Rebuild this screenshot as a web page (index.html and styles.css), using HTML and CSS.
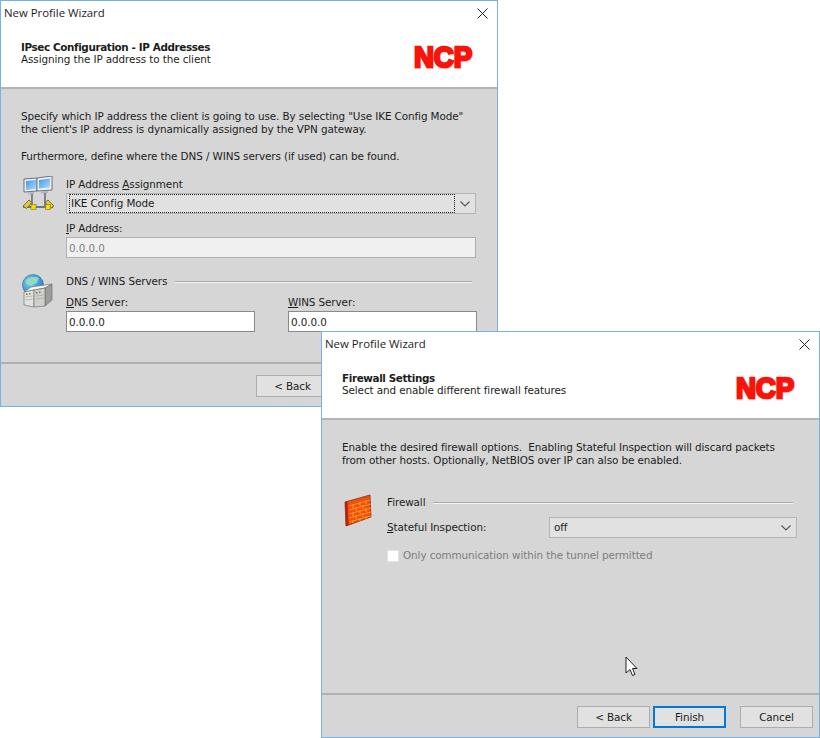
FILE: index.html
```html
<!DOCTYPE html>
<html lang="en">
<head>
<meta charset="utf-8">
<title>New Profile Wizard</title>
<link rel="stylesheet" href="styles.css">
</head>
<body>
<section class="window window-back">
  <div class="titlebar"><span>New Profile Wizard</span><svg class="close" viewBox="0 0 11 11"><path d="M.5.5l10 10M10.5.5l-10 10"/></svg></div>
  <header class="head">
    <div class="head-text"><h1>IPsec Configuration - IP Addresses</h1><p>Assigning the IP address to the client</p></div>
    <svg class="logo" viewBox="0 0 60 26"><text class="logo-shadow" x="1.500" y="24.500" textLength="58" lengthAdjust="spacingAndGlyphs">NCP</text><text class="logo-text" x="1" y="23.500" textLength="58" lengthAdjust="spacingAndGlyphs">NCP</text></svg>
  </header>
  <main class="content">
    <p class="intro">Specify which IP address the client is going to use. By selecting "Use IKE Config Mode"<br>the client's IP address is dynamically assigned by the VPN gateway.</p>
    <p class="intro intro-next">Furthermore, define where the DNS / WINS servers (if used) can be found.</p>
    <div class="group group-assign">
      <svg class="icon" viewBox="0 0 34 36">
        <defs><linearGradient id="scr" x1="0" y1="0" x2="1" y2="1"><stop offset="0" stop-color="#3f96ea"/><stop offset="1" stop-color="#b5dcf8"/></linearGradient></defs>
        <path d="M3 3l13-1v13l-13 1z" fill="#eef2f6" stroke="#5c6470" stroke-width=".9"/><path d="M5 5l10-1v9l-10 1z" fill="url(#scr)"/>
        <path d="M16 2l15-2v14l-15 1z" fill="#eef2f6" stroke="#5c6470" stroke-width=".9"/><path d="M18 4l11-1.500v9l-11 1z" fill="url(#scr)"/>
        <path d="M7 16.500l6-.5v2l-6 .5zM20 15.500l7-.5v2l-7 .5z" fill="#aeb6be"/>
        <path d="M11 18v12M24 17v13M2 31h30" stroke="#4e5862" stroke-width="1.300" fill="none"/>
        <path d="M2 30l6-6 3 2.500-5.500 6z" fill="#e8c63a" stroke="#4f4a20" stroke-width=".7"/><path d="M33 30l-6-6-3 2.500 5.500 6z" fill="#e8c63a" stroke="#4f4a20" stroke-width=".7"/>
        <rect x="10" y="28.500" width="5" height="5" fill="#f8dc00" stroke="#6a6420" stroke-width=".5"/><rect x="24.500" y="28.500" width="5" height="5" fill="#f8dc00" stroke="#6a6420" stroke-width=".5"/>
      </svg>
      <div class="fields fields-narrow">
        <label class="field-label label-first">IP Address <u>A</u>ssignment</label>
        <div class="combo combo-focus"><span class="combo-value">IKE Config Mode</span><svg class="chev" viewBox="0 0 10 6"><path d="M.5.5L5 5 9.500.5"/></svg></div>
        <label class="field-label label-gap"><u>I</u>P Address:</label>
        <div class="input input-off">0.0.0.0</div>
      </div>
    </div>
    <div class="group group-dns">
      <svg class="icon icon-dns" viewBox="0 0 34 36">
        <defs><radialGradient id="globe" cx=".35" cy=".35" r=".8"><stop offset="0" stop-color="#7ed0f0"/><stop offset="1" stop-color="#1c74b8"/></radialGradient></defs>
        <circle cx="12" cy="11" r="10.500" fill="url(#globe)" stroke="#1d6fa8" stroke-width=".6"/><path d="M5 6c4-3 9-4 13-2-2 3-1 5-5 6-2 3-6 2-8-1z" fill="#8fdcc4"/>
        <path d="M3 18l7-5 21-3-7 4z" fill="#f6f6f4" stroke="#666" stroke-width=".6"/>
        <path d="M24 14l7-4v16l-7 6z" fill="#9d9d9a" stroke="#666" stroke-width=".6"/>
        <path d="M3 18l10-2v17l-10-2z" fill="#e2e2df" stroke="#666" stroke-width=".6"/>
        <path d="M13 16l11-2v18l-11 1z" fill="#d0d0cd" stroke="#666" stroke-width=".6"/>
        <path d="M4.500 23l7-1M4.500 26l7-1M15 22l8-1M15 25l8-1" stroke="#9a9a98" stroke-width=".6"/>
        <rect x="5" y="19.500" width="1.500" height="1.500" fill="#d83a2a"/><rect x="8" y="19" width="1.500" height="1.500" fill="#3aa83a"/><rect x="15" y="18" width="1.500" height="1.500" fill="#d83a2a"/><rect x="18" y="17.500" width="1.500" height="1.500" fill="#3aa83a"/>
      </svg>
      <div class="fields">
        <div class="legend legend-back"><span>DNS / WINS Servers</span><span class="rule"></span></div>
        <div class="pair">
          <div class="pair-col"><label class="field-label"><u>D</u>NS Server:</label><div class="input">0.0.0.0</div></div>
          <div class="pair-col"><label class="field-label"><u>W</u>INS Server:</label><div class="input">0.0.0.0</div></div>
        </div>
      </div>
    </div>
  </main>
  <footer class="foot foot-covered">
    <button class="btn" type="button">&lt; Back</button>
  </footer>
</section>

<section class="window window-front">
  <div class="titlebar"><span>New Profile Wizard</span><svg class="close" viewBox="0 0 11 11"><path d="M.5.5l10 10M10.5.5l-10 10"/></svg></div>
  <header class="head">
    <div class="head-text"><h1>Firewall Settings</h1><p>Select and enable different firewall features</p></div>
    <svg class="logo" viewBox="0 0 60 26"><text class="logo-shadow" x="1.500" y="24.500" textLength="58" lengthAdjust="spacingAndGlyphs">NCP</text><text class="logo-text" x="1" y="23.500" textLength="58" lengthAdjust="spacingAndGlyphs">NCP</text></svg>
  </header>
  <main class="content">
    <p class="intro">Enable the desired firewall options.&nbsp; Enabling Stateful Inspection will discard packets<br>from other hosts. Optionally, NetBIOS over IP can also be enabled.</p>
    <div class="group group-fw">
      <svg class="icon icon-fw" viewBox="0 0 28 33">
        <path d="M1 8L26 1l1 22L2 32z" fill="#f2500e" stroke="#6e2a08" stroke-width=".7"/>
        <path d="M1 8l2.500-.7 1 24L2 32z" fill="#b8240a"/>
        <path d="M5 12L26 6M5 16l22-6M5 20l22-6M5 24l22-6M5 28l22-6" stroke="#fb9a24" stroke-width=".9" fill="none"/>
        <path d="M9 10v4M16 8v4M22 6v4M12 13v4M19 11v4M9 18v4M16 16v4M22 14v4M12 21v4M19 19v4M9 26v3M16 24v4M22 22v4" stroke="#fdae30" stroke-width=".8" fill="none"/>
      </svg>
      <div class="fields fields-front">
        <div class="legend legend-front"><span>Firewall</span><span class="rule"></span></div>
        <div class="inline-field">
          <label class="field-label inline-label"><u>S</u>tateful Inspection:</label>
          <div class="combo combo-fill"><span class="combo-value">off</span><svg class="chev" viewBox="0 0 10 6"><path d="M.5.5L5 5 9.500.5"/></svg></div>
        </div>
        <div class="check"><span class="box"></span><span>Only communication within the tunnel permitted</span></div>
      </div>
    </div>
  </main>
  <footer class="foot">
    <button class="btn" type="button">&lt; Back</button>
    <button class="btn btn-default" type="button">Finish</button>
    <button class="btn btn-last" type="button">Cancel</button>
  </footer>
  <svg class="cursor" viewBox="0 0 13 21"><path d="M1 1v16l4-3.500 2.500 6 2.500-1-2.500-6H12z" fill="#fff" stroke="#222" stroke-width="1" stroke-linejoin="round"/></svg>
</section>
</body>
</html>
```
FILE: styles.css
```css
* { box-sizing: border-box; }
html, body { margin: 0; height: 738px; overflow: hidden; background: #fff; }
body {
  position: relative;
  font-family: "DejaVu Sans", sans-serif;
  font-size: 10.4px;
  letter-spacing: -0.09px;
  line-height: 13px;
  color: #1c1c1c;
}
.window {
  position: absolute;
  height: 407px;
  display: flex;
  flex-direction: column;
  border: 1px solid #74b2ec;
  background: #d6d6d6;
}
.window-back { left: 0; top: 0; width: 498px; }
.window-front { left: 321px; top: 331px; width: 499px; }
.titlebar {
  height: 25px;
  flex: none;
  display: flex;
  align-items: center;
  justify-content: space-between;
  padding: 0 9px 0 3px;
  background: #fff;
  font-family: "Open Sans", sans-serif;
  font-size: 11.4px;
  letter-spacing: 0;
}
.titlebar span { padding-bottom: 2px; }
.close { width: 11px; height: 11px; }
.close path { stroke: #222; stroke-width: 1; fill: none; }
.head {
  height: 63px;
  flex: none;
  display: flex;
  justify-content: space-between;
  padding: 14px 24px 0 20px;
  background: #fff;
  border-bottom: 2px solid #b4b4b4;
}
.head-text { padding-top: 1px; }
.head h1 { margin: 0; font-size: 10.4px; line-height: 12px; font-weight: 700; letter-spacing: -0.38px; }
.head p { margin: 0; line-height: 12px; }
.logo { width: 60px; height: 26px; margin-top: 3px; overflow: visible; }
.logo-text, .logo-shadow {
  font-family: "Liberation Sans", sans-serif;
  font-weight: 700;
  font-size: 30px;
  stroke-width: 2.6px;
  stroke-linejoin: miter;
}
.logo-text { fill: #f8140a; stroke: #f8140a; }
.logo-shadow { fill: #d0c8c8; stroke: #e0d8d8; }
.content { flex: 1; padding: 21px 20px 0; min-height: 0; }
.intro { margin: 0; }
.intro-next { margin-top: 14px; }
.group { display: flex; }
.group-assign { margin-top: 15px; }
.group-dns { margin-top: 17px; }
.group-fw { margin-top: 29px; }
.icon { width: 34px; height: 36px; flex: none; margin: -2px 11px 0 0; }
.icon-dns { margin-top: -1px; }
.icon-fw { width: 28px; height: 33px; margin: -2px 15px 0 2px; }
.fields { flex: 1; min-width: 0; }
.fields-narrow { margin-right: 1px; }
.fields-front { margin-right: 2px; }
.field-label { display: block; line-height: 13px; }
.label-gap { margin-top: 8px; }
.combo {
  height: 21px;
  margin-top: 2px;
  display: flex;
  align-items: center;
  justify-content: space-between;
  background: #e1e1e1;
  border: 1px solid #b4b4b4;
  padding: 0 5px 0 2px;
}
.combo-value { flex: 1; line-height: 15px; padding-left: 1px; }
.combo-focus .combo-value { border: 1px dotted #222; margin-right: 5px; padding: 1px; }
.combo-fill .combo-value { padding-left: 2px; }
.chev { width: 10px; height: 6px; flex: none; }
.chev path { stroke: #555; stroke-width: 1.1; fill: none; }
.input {
  height: 21px;
  margin-top: 2px;
  border: 1px solid #8a8a8a;
  background: #fff;
  padding: 3px 2px 0;
  line-height: 14px;
}
.input-off { background: #f0f0f0; border-color: #b0b0b0; color: #808080; }
.legend { display: flex; align-items: center; gap: 8px; }
.legend-back { padding-right: 5px; }
.legend-front { padding-right: 4px; }
.rule { flex: 1; height: 2px; border-top: 1px solid #a8a8a8; border-bottom: 1px solid #f4f4f4; }
.pair { display: flex; gap: 33px; margin-top: 8px; }
.pair-col { width: 189px; flex: none; }
.inline-field { display: flex; align-items: center; margin-top: 8px; }
.inline-label { width: 162px; flex: none; }
.inline-field .combo { flex: 1; margin-top: 0; }
.check { display: flex; align-items: center; gap: 4px; margin-top: 11px; color: #7c7c7c; }
.box { width: 12px; height: 12px; background: #fff; border: 1px solid #e2e2e2; }
.foot {
  height: 44px;
  flex: none;
  display: flex;
  justify-content: flex-end;
  gap: 3px;
  padding: 11px 6px 0 0;
  border-top: 2px solid;
  border-image: linear-gradient(#b0b0b0 50%, #f2f2f2 50%) 2;
}
.foot-covered { padding-right: 168px; }
.btn {
  width: 73px;
  height: 22px;
  padding: 0;
  font: inherit;
  letter-spacing: inherit;
  color: inherit;
  background: #e1e1e1;
  border: 1px solid #adadad;
}
.btn-default { border: 2px solid #0078d7; }
.btn-last { margin-left: 11px; }
.cursor { position: absolute; left: 303px; top: 324px; width: 13px; height: 21px; }
```
